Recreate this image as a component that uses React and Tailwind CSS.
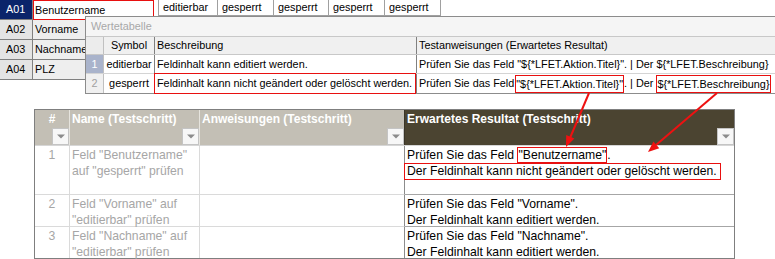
import React from "react";

function FilterBtn() {
  return (
    <div className="self-end w-[17px] h-[17px] border border-[#c4c4c4] bg-[#f7f7f7] flex items-center justify-center">
      <svg width="8" height="5" viewBox="0 0 8 5">
        <path d="M0 0.5h8L4 4.5z" fill="#8c8c8c" />
      </svg>
    </div>
  );
}

function Box({ children, h = "h-[16px]", lh = "leading-[14px]" }) {
  return (
    <span className={`inline-block align-top ${h} ${lh} border border-[#e81010]`}>{children}</span>
  );
}

export default function App() {
  const rows = [
    { id: "A02", name: "Vorname" },
    { id: "A03", name: "Nachname" },
    { id: "A04", name: "PLZ" },
  ];
  return (
    <div className="relative w-[775px] h-[259px] overflow-hidden bg-white font-['Liberation_Sans',Arial,sans-serif] text-black">
      {/* top area */}
      <div className="flex items-start h-[80px] text-[10.8px]">
        <div className="w-[155px] flex flex-col">
          <div className="flex h-[20px]">
            <div className="w-[33px] h-full border-r border-b border-[#808080] bg-[#0a246a] text-white pl-[6px] leading-[19px]">
              A01
            </div>
            <div className="w-[121px] h-full border border-[#e81010] bg-white pl-[1px] leading-[18px]">
              Benutzername
            </div>
          </div>
          {rows.map((r) => (
            <div key={r.id} className="flex h-[20px] border-b border-[#808080]">
              <div className="w-[33px] border-r border-[#808080] bg-[#e4e4e4] pl-[6px] leading-[19px]">
                {r.id}
              </div>
              <div className="flex-1 bg-[#eeeeee] pl-[2px] leading-[19px] whitespace-nowrap overflow-hidden">
                {r.name}
              </div>
            </div>
          ))}
        </div>
        <div className="ml-[3px] flex h-[16px] border-l border-b border-[#a0a0a0] bg-white">
          <div className="w-[59px] border-r border-[#a0a0a0] pl-[4px] leading-[15px]">editierbar</div>
          <div className="w-[56px] border-r border-[#a0a0a0] pl-[4px] leading-[15px]">gesperrt</div>
          <div className="w-[55px] border-r border-[#a0a0a0] pl-[4px] leading-[15px]">gesperrt</div>
          <div className="w-[56px] border-r border-[#a0a0a0] pl-[4px] leading-[15px]">gesperrt</div>
          <div className="w-[56px] border-r border-[#a0a0a0] pl-[4px] leading-[15px]">gesperrt</div>
        </div>
      </div>

      {/* bottom table */}
      <div className="mt-[29px] ml-[34px] w-[701px] border border-[#7f7f7f] flex flex-col">
        <div className="flex h-[36px] border-b border-[#d6d6d6] text-[12px] font-bold text-white">
          <div className="w-[35px] bg-[#c3bfb5] border-r border-[#e6e4de] flex flex-col justify-between">
            <div className="pt-[1px] leading-[16px] text-center">#</div>
            <FilterBtn />
          </div>
          <div className="w-[130px] bg-[#c3bfb5] border-r border-[#e6e4de] flex flex-col justify-between">
            <div className="pt-[1px] pl-[2px] leading-[16px] whitespace-nowrap">Name (Testschritt)</div>
            <FilterBtn />
          </div>
          <div className="w-[205px] bg-[#c3bfb5] border-r border-[#3a3528] flex flex-col justify-between">
            <div className="pt-[1px] pl-[2px] leading-[16px] whitespace-nowrap">Anweisungen (Testschritt)</div>
            <FilterBtn />
          </div>
          <div className="flex-1 bg-[#4b4431] flex flex-col justify-between">
            <div className="pt-[1px] pl-[2px] leading-[16px] whitespace-nowrap">Erwartetes Resultat (Testschritt)</div>
            <FilterBtn />
          </div>
        </div>

        {/* row 1 */}
        <div className="flex h-[49px] text-[12.2px] leading-[16px]">
          <div className="w-[35px] border-r border-b border-[#dadada] text-center text-[#a6a6a6] pt-[1px]">1</div>
          <div className="w-[130px] border-r border-b border-[#dadada] text-[#a6a6a6] pl-[2px] pt-[1px] whitespace-nowrap">
            Feld "Benutzername"
            <br />
            auf "gesperrt" prüfen
          </div>
          <div className="w-[205px] border-r border-b border-[#dadada] border-r-[#8c8c8c]"></div>
          <div className="flex-1 border-b border-[#a6a6a6] pl-[2px] pt-[1px] whitespace-nowrap">
            <div className="h-[16px] leading-[16px]">
              Prüfen Sie das Feld <Box>"Benutzername"</Box>.
            </div>
            <div className="h-[17px] leading-[17px]">
              <span className="inline-block align-top h-[17px] leading-[15px] border border-[#e81010] -ml-[3px] pl-[2px] pr-[3px]">
                Der Feldinhalt kann nicht geändert oder gelöscht werden.
              </span>
            </div>
          </div>
        </div>

        {/* row 2 */}
        <div className="flex h-[32px] text-[12.2px] leading-[16px]">
          <div className="w-[35px] border-r border-b border-[#dadada] text-center text-[#a6a6a6] pt-[1px]">2</div>
          <div className="w-[130px] border-r border-b border-[#dadada] text-[#a6a6a6] pl-[2px] pt-[1px] whitespace-nowrap">
            Feld "Vorname" auf
            <br />
            "editierbar" prüfen
          </div>
          <div className="w-[205px] border-r border-b border-[#dadada] border-r-[#8c8c8c]"></div>
          <div className="flex-1 border-b border-[#a6a6a6] pl-[2px] pt-[1px] whitespace-nowrap">
            Prüfen Sie das Feld "Vorname".
            <br />
            Der Feldinhalt kann editiert werden.
          </div>
        </div>

        {/* row 3 */}
        <div className="flex h-[31px] text-[12.2px] leading-[16px]">
          <div className="w-[35px] border-r border-[#dadada] text-center text-[#a6a6a6] pt-[1px]">3</div>
          <div className="w-[130px] border-r border-[#dadada] text-[#a6a6a6] pl-[2px] pt-[1px] whitespace-nowrap">
            Feld "Nachname" auf
            <br />
            "editierbar" prüfen
          </div>
          <div className="w-[205px] border-r border-[#8c8c8c]"></div>
          <div className="flex-1 pl-[2px] pt-[1px] whitespace-nowrap">
            Prüfen Sie das Feld "Nachname".
            <br />
            Der Feldinhalt kann editiert werden.
          </div>
        </div>
      </div>

      {/* Wertetabelle popup */}
      <div className="absolute left-[85px] top-[16px] w-[700px] h-[78px] border border-[#8c8c8c] bg-[#f5f5f5] text-[10.85px]">
        <div className="h-[19px] pl-[5px] leading-[19px] text-[#a8a8a8]">Wertetabelle</div>
        <div className="flex h-[19px] border-t border-b border-[#c8c8c8] bg-[#f0f0f0] leading-[17px]">
          <div className="w-[18px] border-r border-[#c0c0c0] bg-[#ececec]"></div>
          <div className="w-[51px] border-r border-[#808080] text-center">Symbol</div>
          <div className="w-[262px] border-r border-[#808080] pl-[2px]">Beschreibung</div>
          <div className="flex-1 pl-[2px] whitespace-nowrap">Testanweisungen (Erwartetes Resultat)</div>
        </div>
        <div className="flex h-[19px] border-b border-[#d4d4d4] leading-[18px]">
          <div className="w-[18px] border-r border-[#c0c0c0] bg-[#a9b3cb] text-white text-center">1</div>
          <div className="w-[51px] border-r border-[#808080] bg-white text-center">editierbar</div>
          <div className="w-[262px] border-r border-[#808080] bg-white pl-[2px]">Feldinhalt kann editiert werden.</div>
          <div className="flex-1 bg-white pl-[2px] whitespace-nowrap">
            Prüfen Sie das Feld "{"${*LFET.Aktion.Titel}"}". | Der {"${*LFET.Beschreibung}"}
          </div>
        </div>
        <div className="flex h-[19px] leading-[19px]">
          <div className="w-[18px] border-r border-[#c0c0c0] bg-[#f0f0f0] text-[#a0a0a0] text-center">2</div>
          <div className="w-[51px] border-r border-[#808080] bg-white text-center">gesperrt</div>
          <div className="relative w-[262px] border-r border-[#808080] bg-white pl-[2px] whitespace-nowrap">
            Feldinhalt kann nicht geändert oder gelöscht werden.
            <div className="absolute -top-[1px] -bottom-[1px] -left-[1px] right-0 border border-[#e81010]"></div>
          </div>
          <div className="flex-1 bg-white pl-[2px] whitespace-nowrap">
            Prüfen Sie das Feld
            <span className="inline-block align-top mt-[1px] ml-[1px] h-[18px] leading-[16px] border border-[#e81010]">
              "{"${*LFET.Aktion.Titel}"}"
            </span>
            . | Der{" "}
            <span className="inline-block align-top mt-[1px] h-[18px] leading-[16px] border border-[#e81010]">
              {"${*LFET.Beschreibung}"}
            </span>
          </div>
        </div>
      </div>

      {/* arrows */}
      <svg className="absolute left-0 top-0 pointer-events-none" width="775" height="259" viewBox="0 0 775 259">
        <line x1="589" y1="93" x2="570" y2="138" stroke="#ee1111" strokeWidth="2" />
        <polygon points="566,147 574.4,138.6 566.2,135.1" fill="#ee1111" />
        <line x1="717" y1="93" x2="656" y2="145" stroke="#ee1111" strokeWidth="2" />
        <polygon points="648,152 659.3,148.3 653.4,141.4" fill="#ee1111" />
      </svg>
    </div>
  );
}
